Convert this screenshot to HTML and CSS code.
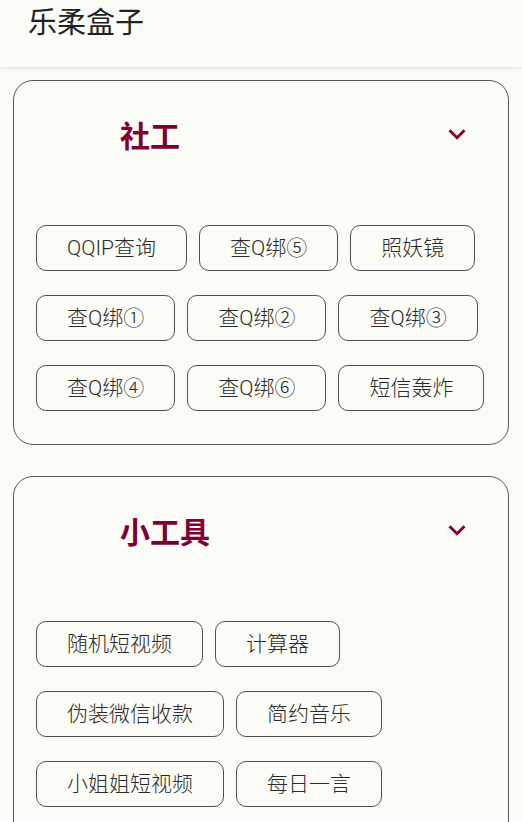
FILE: index.html
```html
<!DOCTYPE html>
<html lang="zh-CN">
	<head>
		<meta charset="UTF-8" />
		<meta name="viewport" content="width=device-width, initial-scale=1.0" />
		<title>乐柔盒子</title>
		<link rel="stylesheet" href="styles.css">
	</head>
	<body>
		<header class="topbar">乐柔盒子</header>

		<section class="card">
			<div class="card-head">
				<h2 class="card-title">社工</h2>
				<svg class="chevron" viewBox="0 0 24 24"><path d="M7.41 8.59 12 13.17l4.59-4.58L18 10l-6 6-6-6z" /></svg>
			</div>
			<div class="tools">
				<button class="tool">QQIP查询</button>
				<button class="tool">查Q绑⑤</button>
				<button class="tool">照妖镜</button>
				<button class="tool">查Q绑①</button>
				<button class="tool">查Q绑②</button>
				<button class="tool">查Q绑③</button>
				<button class="tool">查Q绑④</button>
				<button class="tool">查Q绑⑥</button>
				<button class="tool">短信轰炸</button>
			</div>
		</section>

		<section class="card">
			<div class="card-head">
				<h2 class="card-title">小工具</h2>
				<svg class="chevron" viewBox="0 0 24 24"><path d="M7.41 8.59 12 13.17l4.59-4.58L18 10l-6 6-6-6z" /></svg>
			</div>
			<div class="tools">
				<button class="tool">随机短视频</button>
				<button class="tool">计算器</button>
				<button class="tool">伪装微信收款</button>
				<button class="tool">简约音乐</button>
				<button class="tool">小姐姐短视频</button>
				<button class="tool">每日一言</button>
			</div>
		</section>
	</body>
</html>
```

FILE: styles.css
```css
body {
	font-family: Roboto, "Noto Sans CJK SC", sans-serif;
	margin: 0;
	padding: 0;
	background-color: #fcfcf7;
	color: #222;
}

.topbar {
	height: 67px;
	box-sizing: border-box;
	padding-left: 28px;
	font-size: 29px;
	line-height: 46px;
	background-color: #fcfcf7;
	box-shadow: 0 1px 4px rgba(0, 0, 0, 0.12);
	margin-bottom: 13px;
}

.card {
	margin: 0 13px 31px 13px;
	padding: 0 21px 33px 22px;
	border: 1px solid #555;
	border-radius: 20px;
}

.card-head {
	height: 105px;
	display: flex;
	align-items: center;
	justify-content: space-between;
	padding: 0 13px 0 84px;
	margin-bottom: 39px;
}

.card-title {
	margin: 0;
	font-size: 30px;
	font-weight: bold;
	color: #800033;
}

.chevron {
	width: 34px;
	height: 34px;
	fill: #800033;
}

.tools {
	display: flex;
	flex-wrap: wrap;
	gap: 24px 12px;
}

.tool {
	font-family: inherit;
	font-size: 21px;
	font-weight: 300;
	line-height: 28px;
	padding: 8px 30px;
	color: #2a2a2a;
	background: transparent;
	border: 1px solid #505050;
	border-radius: 10px;
}
```
